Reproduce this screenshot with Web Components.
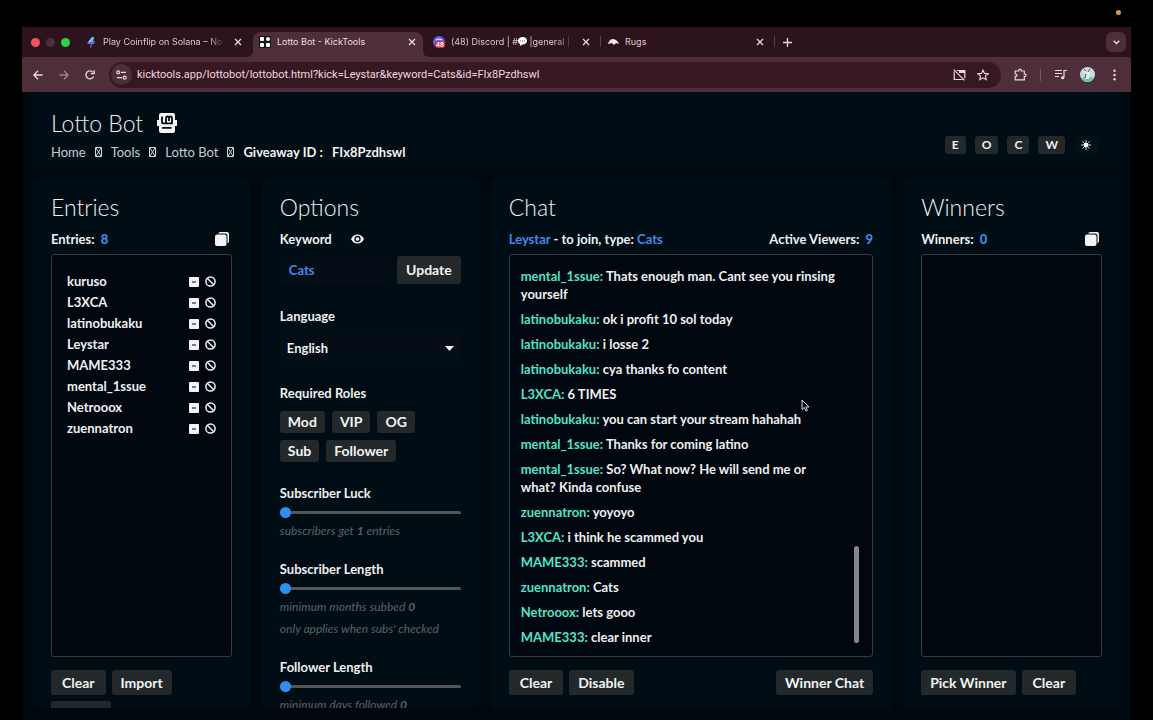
<!DOCTYPE html>
<html lang="en">
<head>
<meta charset="utf-8">
<meta name="viewport" content="width=device-width, initial-scale=1">
<title>Lotto Bot - KickTools</title>
<style>
html,body{margin:0;height:100%;background:#000}
body{overflow:hidden;font-family:Lato,"Noto Sans",sans-serif;font-size:13px;color:#eef0f1}
</style>
</head>
<body>
<lotto-desktop></lotto-desktop>
<script>
const reset = `*{box-sizing:border-box}svg{display:block;flex:none}button,input,select{font:inherit;color:inherit;margin:0;border:0}button{background:none;padding:0;display:grid;place-items:center}h1,h2,p,ul,ol{margin:0;padding:0;font-weight:inherit}ul,ol{list-style:none}a{color:inherit;text-decoration:none}`;

function define(tag, html, setup) {
  const template = document.createElement('template');
  template.innerHTML = `<style>${reset}</style>${html}`;
  customElements.define(tag, class extends HTMLElement {
    constructor() {
      super();
      this.attachShadow({mode: 'open'}).append(template.content.cloneNode(true));
    }
    connectedCallback() { if (setup) setup.call(this, this.shadowRoot); }
  });
}

define('tab-close', `<style>:host{display:block;flex:none}</style>
<button aria-label="Close tab"><svg width="8" height="8" viewBox="0 0 8 8" stroke="#eadadf" stroke-width="1.3"><path d="M1 1l6 6M7 1L1 7"/></svg></button>`);

define('browser-tab', `<style>
:host{display:flex;flex:0 1 174px;min-width:0;height:25px;align-items:center;position:relative;font:9px Inter,sans-serif;color:#dccbd0;padding:0 11px 5px 6px}
.icon{width:12px;height:12px;margin-right:6px;flex:none;display:grid;place-items:center}
.label{flex:1;min-width:0;white-space:nowrap;overflow:hidden;line-height:16px;margin-right:8px}
:host([fade]) .label{-webkit-mask-image:linear-gradient(90deg,#000 85%,transparent)}
:host([divided])::after{content:"";position:absolute;right:0;top:4px;height:11px;width:1px;background:#58404a}
:host([active]){background:#4e2e39;border-radius:8px 8px 0 0;flex-basis:170px;margin-right:4px;color:#ecdfe3;padding-right:7px}
:host([active])::before,:host([active])::after{content:"";position:absolute;bottom:0;width:6px;height:6px}
:host([active])::before{left:-6px;background:radial-gradient(circle at 0 0,transparent 6px,#4e2e39 6px)}
:host([active])::after{right:-6px;background:radial-gradient(circle at 100% 0,transparent 6px,#4e2e39 6px)}
</style><span class="icon"><slot name="icon"></slot></span><span class="label"><slot></slot></span><tab-close></tab-close>`);

define('browser-tabs', `<style>
:host{display:flex;height:30px;background:#2d141c;align-items:flex-end}
.lights{display:flex;gap:6px;width:57px;height:30px;align-items:center;padding-left:9px;flex:none}
.lights i{width:9px;height:9px;border-radius:50%;background:#f2545b}
.lights i:nth-child(2){background:#4b3139}.lights i:nth-child(3){background:#2fd145}
.new{width:24px;height:30px}
.list{margin:0 5px 5px auto;width:20px;height:20px;border-radius:6px;background:#4e2e39}
svg{display:block}
</style>
<div class="lights"><i></i><i></i><i></i></div>
<browser-tab fade><svg slot="icon" width="8" height="11" viewBox="0 0 8 11"><path d="M5 0h2L6 4h2L7 7H5L4 11 3 10l1-3H0L1 5z" fill="#7a68df"/><path d="M5 0h2L6 4l-2 1L1 5z" fill="#64c6e8"/></svg>Play Coinflip on Solana – No House</browser-tab>
<browser-tab active><svg slot="icon" width="12" height="12" viewBox="0 0 12 12" fill="#fff"><rect width="12" height="12" rx="1" fill="#15191c"/><rect x="1" y="1" width="4" height="4" rx="1"/><circle cx="9" cy="3" r="2"/><rect x="1" y="7" width="4" height="4" rx="1"/><rect x="7" y="7" width="4" height="4" rx="1"/></svg>Lotto Bot - KickTools</browser-tab>
<browser-tab fade divided><svg slot="icon" width="12" height="12" viewBox="0 0 12 12"><circle cx="6" cy="6" r="6" fill="#5865f2"/><path d="M3 4q3-2 6 0" stroke="#fff" fill="none"/><rect x="2" y="5" width="10" height="7" rx="3" fill="#dc2839"/><text x="7" y="11" font-family="Inter" font-size="6" font-weight="700" fill="#fff" text-anchor="middle">48</text></svg>(48) Discord | #<svg style="display:inline-block;vertical-align:-1px" width="9" height="9" viewBox="0 0 9 9"><path d="M4.500 0C7 0 9 1.500 9 3.700S7 7.500 4.500 7.500L2 9V7C.8 6.400 0 5 0 3.700 0 1.500 2 0 4.500 0z" fill="#fff"/><path d="M2 4h5" stroke="#75656b" stroke-dasharray="1 1"/></svg> |general | Lobby</browser-tab>
<browser-tab divided><svg slot="icon" width="11" height="6" viewBox="0 0 11 6"><path d="M0 5Q1 1 4 0q5 0 7 5L8 4 6 6 4 4z" fill="#f4eef0"/></svg>Rugs</browser-tab>
<button class="new" aria-label="New tab"><svg width="9" height="9" viewBox="0 0 9 9" stroke="#eadadf" stroke-width="1.300"><path d="M4.500 0v9M0 4.500h9"/></svg></button>
<button class="list" aria-label="Search tabs"><svg width="7" height="5" viewBox="0 0 7 5" fill="none" stroke="#eadadf" stroke-width="1.400"><path d="M.7.7l2.800 2.800L6.300.7"/></svg></button>`);

define('browser-toolbar', `<style>
:host{display:flex;align-items:center;height:35px;background:#4e2e39;color:#eadadf;padding:0 15px 0 11px;border-radius:3px 3px 0 0}
.nav{display:flex;gap:16px;padding-right:14px}
.nav svg{width:10px;height:10px}
.dim{opacity:.5}
.bar{display:flex;flex:1;min-width:0;height:26px;border-radius:13px;background:#371822;align-items:center;padding:0 12px 0 2px}
.site{width:21px;height:21px;border-radius:50%;background:#4e2e39;margin-right:5px;flex:none}
.bar input{flex:1;min-width:0;background:none;padding:0;outline:0;font:11px Roboto,sans-serif;color:#eadadf;height:20px}
.marks{display:flex;gap:11px}
.right{display:flex;align-items:center;padding-left:13px}
.line{width:1px;height:12px;background:#755660;margin:0 14px 0 13px}
.avatar{margin:0 18px 0 13px;border-radius:50%}
</style>
<nav class="nav">
<button aria-label="Back"><svg viewBox="0 0 10 10" fill="none" stroke="currentColor" stroke-width="1.300"><path d="M9.500 5H1M5 .8L.8 5 5 9.200"/></svg></button>
<button class="dim" aria-label="Forward"><svg viewBox="0 0 10 10" fill="none" stroke="currentColor" stroke-width="1.300"><path d="M.5 5H9M5 .8L9.200 5 5 9.200"/></svg></button>
<button aria-label="Reload"><svg viewBox="0 0 10 10" fill="none" stroke="currentColor" stroke-width="1.300"><path d="M8.600 6.500A4 4 0 1 1 8 2.300M9.200.3v3.400H5.800"/></svg></button>
</nav>
<div class="bar">
<button class="site" aria-label="Site information"><svg width="11" height="10" viewBox="0 0 11 10" fill="none" stroke="currentColor" stroke-width="1.200"><circle cx="2.200" cy="2.300" r="1.500"/><path d="M5 2.300h5M1 7.700h5"/><circle cx="8.700" cy="7.700" r="1.500"/></svg></button>
<input aria-label="Address" value="kicktools.app/lottobot/lottobot.html?kick=Leystar&amp;keyword=Cats&amp;id=FIx8Pzdhswl">
<div class="marks">
<button aria-label="Third-party content blocked"><svg width="13" height="12" viewBox="0 0 13 12" fill="none" stroke="currentColor" stroke-width="1.200"><path d="M4 1.500h7.800v7.700M9.500 10.500H1.200V2.500M.8.700l10.700 10.700"/><path d="M6 3h6" stroke-width="2"/></svg></button>
<button aria-label="Bookmark"><svg width="12" height="12" viewBox="0 0 12 12" fill="none" stroke="currentColor" stroke-width="1.100"><path d="M6 1l1.500 3.400 3.700.3-2.800 2.400.9 3.600L6 8.800l-3.300 1.900.9-3.600L.8 4.700l3.700-.3z"/></svg></button>
</div></div>
<div class="right">
<button aria-label="Extensions"><svg width="13" height="13" viewBox="0 0 13 13" fill="none" stroke="currentColor" stroke-width="1.200"><path d="M1.200 3h3.500c-.3-2.600 2.900-2.600 2.600 0h3v3c2.300-.2 2.300 2.700 0 2.500v3.300H1.200V8.700c2.400 0 2.400-2.700 0-2.700z"/></svg></button>
<span class="line"></span>
<button aria-label="Media controls"><svg width="12" height="11" viewBox="0 0 12 11" fill="none" stroke="currentColor" stroke-width="1.200"><path d="M0 1.500h7M0 4.500h7M0 7.500h4M9 8.500V1.500h3"/><circle cx="7.700" cy="8.700" r="1.600" fill="currentColor" stroke="none"/></svg></button>
<button class="avatar" aria-label="Profile"><svg width="15" height="15" viewBox="0 0 15 15"><circle cx="7.500" cy="7.500" r="7.500" fill="#cdd8e6"/><path d="M1 11q6-2 13 0-2 4-6.500 4T1 11z" fill="#57cfa2"/><path d="M4 2l2 3h2l2-3v5l-1 5H5l1-5z" fill="#efe9dd"/><path d="M4 2l2 2M10 2L8 5M6 7l-1 4" stroke="#4d4a43"/></svg></button>
<button aria-label="Menu"><svg width="3" height="12" viewBox="0 0 3 12" fill="currentColor"><circle cx="1.500" cy="1.700" r="1.200"/><circle cx="1.500" cy="6" r="1.200"/><circle cx="1.500" cy="10.300" r="1.200"/></svg></button>
</div>`);

define('lotto-button', `<style>
:host{display:block;flex:none}
button{width:100%;height:25px;padding:0 9px;border-radius:3px;background:#23292b;color:#f1f2f2;font-size:14px;font-weight:700;line-height:18px;white-space:nowrap}
:host([wide]) button{padding:0 11px}
:host([size=role]) button{height:22px;padding:0 8px}
:host([size=field]) button{height:28px}
:host([size=key]) button{height:18px;padding:0 7px;font-size:12px}
:host([quiet]) button{background:#050f16}
</style><button><slot></slot></button>`);

define('copy-icon', `<style>:host{display:block;margin-right:3px}</style><button aria-label="Copy list"><svg width="14" height="14" viewBox="0 0 14 14" fill="#f3f3f3"><path d="M5 0h7a2 2 0 0 1 2 2v7a2 2 0 0 1-1.500 2V4A2.500 2.500 0 0 0 10 1.500H3.200A2 2 0 0 1 5 0z"/><rect y="2.500" width="11.500" height="11.500" rx="2"/></svg></button>`);

define('crumb-mark', `<style>:host{display:block;margin:0 9px}</style><svg width="7" height="10" viewBox="0 0 7 10" fill="none" stroke="#d3d8da"><path d="M.5.5h6v9h-6zM1 1l5 8M6 1L1 9"/></svg>`);

define('lotto-header', `<style>
:host{display:flex;justify-content:space-between;align-items:flex-end;background:#010d14;padding:0 22px 7px 18px}
h1{display:flex;align-items:center;gap:14px;font-size:23px;font-weight:300;line-height:28px;margin-bottom:6px}
.crumbs{display:flex;align-items:center;font-size:13px;line-height:18px;color:#c6cbce;white-space:nowrap}
b{color:#f1f2f2;margin-right:9px}
.keys{display:flex;gap:9px;padding-bottom:7px}
</style>
<div><h1>Lotto Bot <svg width="20" height="20" viewBox="0 0 20 20"><path d="M4 0h12q2 0 2 2v5h2v6h-2v5q0 2-2 2H4q-2 0-2-2v-5H0V7h2V2q0-2 2-2z" fill="#f4f4f4"/><path d="M5 3.500v5.800q0 1 1 1h9V5.500q0-2-1.500-2T12 5.500q0-2-1.500-2T9 5.500v4.300M12 5v3M5 14.800h9.500" fill="none" stroke="#010d14" stroke-width="1.800"/></svg></h1>
<nav class="crumbs"><a href="#home">Home</a><crumb-mark></crumb-mark><a href="#tools">Tools</a><crumb-mark></crumb-mark><a href="#lotto">Lotto Bot</a><crumb-mark></crumb-mark><b>Giveaway ID :</b><b>FIx8Pzdhswl</b></nav></div>
<div class="keys"><lotto-button size="key">E</lotto-button><lotto-button size="key">O</lotto-button><lotto-button size="key">C</lotto-button><lotto-button size="key">W</lotto-button><lotto-button size="key" quiet><svg role="img" aria-label="Light theme" width="10" height="10" viewBox="0 0 10 10" stroke="#fff"><circle cx="5" cy="5" r="2.300" fill="#fff" stroke="none"/><path d="M5 0v10M0 5h10M1.500 1.500l7 7M8.500 1.500l-7 7" stroke-width=".8"/></svg></lotto-button></div>`);

define('lotto-panel', `<style>
:host{display:block;min-width:0;overflow:hidden;background:#010d14;padding:11px 18px 0;font-weight:700}
h2{font-size:23px;font-weight:300;line-height:32px;margin-bottom:6px}
.top{display:flex;height:20px;align-items:center;justify-content:space-between;margin-bottom:5px;white-space:nowrap}
</style><h2><slot name="title"></slot></h2><div class="top"><slot name="info"></slot><slot name="aside"></slot></div><slot></slot>`);

define('count-label', `<style>:host{display:block;white-space:nowrap}b{color:#3d8bea;margin-left:3px}</style><slot></slot> <b></b>`,
  function (root) { root.querySelector('b').textContent = this.getAttribute('value'); });

define('list-box', `<style>:host{display:block;height:56vh;border:1px solid #343d42;border-radius:3px;background:#00070e;position:relative;overflow:hidden}</style><slot></slot>`);

define('button-row', `<style>:host{display:flex;flex-wrap:wrap;gap:6px;padding-top:13px}</style><slot></slot>`);

define('entry-row', `<style>:host{display:flex;height:21px;align-items:center;padding:0 15px;gap:6px}span{flex:1;line-height:21px}</style>
<span><slot></slot></span><button aria-label="Remove"><svg width="10" height="10" viewBox="0 0 10 10"><rect width="10" height="10" rx="1" fill="#f3f3f3"/><path d="M3 5h4" stroke="#00070e" stroke-width="1.200"/></svg></button><button aria-label="Ban"><svg width="11" height="11" viewBox="0 0 11 11" fill="none" stroke="#f0f0f0" stroke-width="1.500"><circle cx="5.500" cy="5.500" r="4.600"/><path d="M2.300 2.300l6.400 6.400"/></svg></button>`);

const panelHost = `:host{display:grid;grid-template-rows:minmax(0,1fr);grid-template-columns:minmax(0,1fr);min-width:0;min-height:0}`;

define('entries-panel', `<style>${panelHost}.rows{padding-top:16px}</style>
<lotto-panel><span slot="title">Entries</span><count-label slot="info" value="8">Entries:</count-label><copy-icon slot="aside"></copy-icon>
<list-box><div class="rows"></div></list-box>
<button-row><lotto-button wide>Clear</lotto-button><lotto-button>Import</lotto-button><lotto-button>Export</lotto-button></button-row></lotto-panel>`,
function (root) {
  const names = ['kuruso', 'L3XCA', 'latinobukaku', 'Leystar', 'MAME333', 'mental_1ssue', 'Netrooox', 'zuennatron'];
  root.querySelector('.rows').innerHTML = names.map(n => `<entry-row>${n}</entry-row>`).join('');
});

define('range-field', `<style>
:host{display:block;margin-top:16px}
label{display:block;line-height:23px}
input{display:block;width:100%;height:15px;appearance:none;background:none}
input::-webkit-slider-runnable-track{height:3px;border-radius:2px;background:#535559}
input::-webkit-slider-thumb{appearance:none;width:11px;height:11px;margin-top:-4px;border-radius:50%;background:#2b90f6}
.hint{color:#596167;font-style:italic;font-weight:400;font-size:12px;line-height:22px;white-space:nowrap}
</style><label for="r"></label><input id="r" type="range" min="0" max="60" value="0"><div class="hint"><slot></slot></div>`,
function (root) { root.querySelector('label').textContent = this.getAttribute('label'); });

define('options-panel', `<style>
${panelHost}
.key{display:flex;align-items:center;gap:19px}
.field{display:flex;gap:6px;padding-top:2px}
.field input{flex:1;min-width:0;height:28px;padding:0 9px;border-radius:3px;background:#050e16;color:#3d8bea;font-weight:700;outline:0}
label,.legend{display:block;line-height:20px}
.lang{display:block;margin:22px 0 8px}
.pick{position:relative}
select{appearance:none;width:100%;height:28px;border-radius:3px;background:#050e16;padding:0 7px;font-weight:700}
.pick svg{position:absolute;right:7px;top:12px;pointer-events:none}
.legend{margin:21px 0 8px}
.roles{display:flex;flex-wrap:wrap;gap:7px;margin-bottom:20px}
p{line-height:22px}
</style>
<lotto-panel><span slot="title">Options</span>
<div slot="info" class="key"><label for="keyword">Keyword</label><button aria-label="Show keyword"><svg width="13" height="10" viewBox="0 0 13 10"><path d="M0 5Q2.200.4 6.500.4T13 5Q10.800 9.600 6.500 9.600T0 5z" fill="#f3f3f3"/><circle cx="6.500" cy="5" r="2.500" fill="none" stroke="#010d14" stroke-width="1.300"/></svg></button></div>
<div class="field"><input id="keyword" value="Cats"><lotto-button size="field">Update</lotto-button></div>
<label class="lang" for="lang">Language</label>
<div class="pick"><select id="lang"><option>English</option></select><svg width="9" height="5" viewBox="0 0 9 5"><path d="M0 0h9L4.500 5z" fill="#f3f3f3"/></svg></div>
<div class="legend">Required Roles</div>
<div class="roles"><lotto-button size="role">Mod</lotto-button><lotto-button size="role">VIP</lotto-button><lotto-button size="role">OG</lotto-button><lotto-button size="role">Sub</lotto-button><lotto-button size="role">Follower</lotto-button></div>
<range-field label="Subscriber Luck">subscribers get <b>1</b> entries</range-field>
<range-field label="Subscriber Length"><p>minimum months subbed <b>0</b></p><p>only applies when subs' checked</p></range-field>
<range-field label="Follower Length">minimum days followed <b>0</b></range-field>
</lotto-panel>`);

define('chat-line', `<style>:host{display:block;line-height:18px}b{color:#51e3cb;font-weight:700}</style><b></b> <slot></slot>`,
  function (root) { root.querySelector('b').textContent = this.getAttribute('user') + ':'; });

define('chat-panel', `<style>
${panelHost}
.join i{font-style:normal;color:#3d8bea}
.log{display:flex;flex-direction:column;gap:7px;padding:12px 30px 0 11px}
.thumb{position:absolute;right:13px;bottom:13px;width:5px;height:97px;border-radius:3px;background:#85868a}
</style>
<lotto-panel><span slot="title">Chat</span><span slot="info" class="join"><i>Leystar</i> - to join, type: <i>Cats</i></span><count-label slot="aside" value="9">Active Viewers:</count-label>
<list-box><div class="log"></div><div class="thumb"></div></list-box>
<button-row><lotto-button wide>Clear</lotto-button><lotto-button>Disable</lotto-button><lotto-button style="margin-left:auto">Winner Chat</lotto-button></button-row></lotto-panel>`,
function (root) {
  const log = [
    ['mental_1ssue', 'Thats enough man. Cant see you rinsing yourself'],
    ['latinobukaku', 'ok i profit 10 sol today'],
    ['latinobukaku', 'i losse 2'],
    ['latinobukaku', 'cya thanks fo content'],
    ['L3XCA', '6 TIMES'],
    ['latinobukaku', 'you can start your stream hahahah'],
    ['mental_1ssue', 'Thanks for coming latino'],
    ['mental_1ssue', 'So? What now? He will send me or what? Kinda confuse'],
    ['zuennatron', 'yoyoyo'],
    ['L3XCA', 'i think he scammed you'],
    ['MAME333', 'scammed'],
    ['zuennatron', 'Cats'],
    ['Netrooox', 'lets gooo'],
    ['MAME333', 'clear inner']];
  root.querySelector('.log').innerHTML = log.map(([u, t]) => `<chat-line user="${u}">${t}</chat-line>`).join('');
});

define('winners-panel', `<style>${panelHost}</style>
<lotto-panel><span slot="title">Winners</span><count-label slot="info" value="0">Winners:</count-label><copy-icon slot="aside"></copy-icon>
<list-box></list-box><button-row><lotto-button>Pick Winner</lotto-button><lotto-button wide>Clear</lotto-button></button-row></lotto-panel>`);

define('lotto-desktop', `<style>
:host{display:flex;flex-direction:column;height:100vh;padding:27px 22px 0;position:relative;box-sizing:border-box}
.tabs{background:#2d141c}
.page{flex:1;min-height:0;display:flex;flex-direction:column;gap:12px;padding:0 11px 12px;background:#00080f}
lotto-header{flex:none;height:76px}
.cols{flex:1;min-height:0;display:grid;grid-template-columns:13fr 13fr 24fr 13fr;grid-template-rows:minmax(0,1fr);gap:12px}
.dot{position:absolute;right:32px;top:10px;width:5px;height:5px;border-radius:50%;background:#e59a2e}
.pointer{position:absolute;left:801px;top:399px}
</style>
<span class="dot"></span>
<div class="tabs"><browser-tabs></browser-tabs><browser-toolbar></browser-toolbar></div>
<div class="page"><lotto-header></lotto-header>
<div class="cols"><entries-panel></entries-panel><options-panel></options-panel><chat-panel></chat-panel><winners-panel></winners-panel></div></div>
<svg class="pointer" width="9" height="13" viewBox="0 0 9 13"><path d="M1 1v9.500l2.300-2 1.600 3.500 1.500-.7-1.500-3.300H8z" fill="#05090d" stroke="#d8dadb" stroke-width="1"/></svg>`);
</script>
</body>
</html>
